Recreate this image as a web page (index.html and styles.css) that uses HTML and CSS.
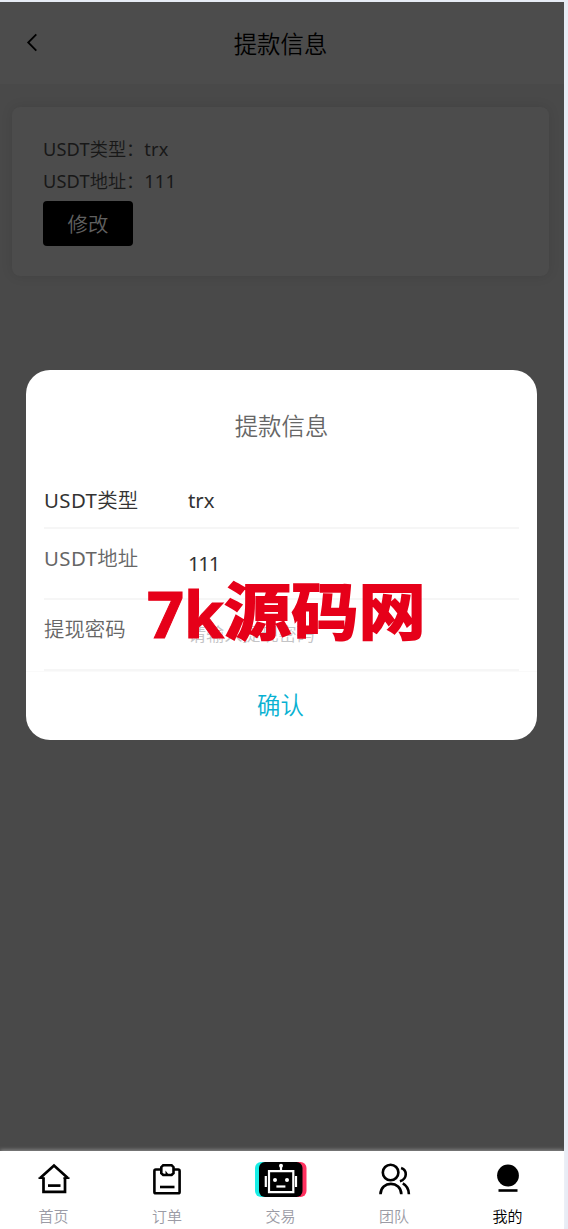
FILE: index.html
```
<!DOCTYPE html>
<html lang="zh-CN">
<head>
<meta charset="utf-8">
<title>提款信息</title>
<link rel="stylesheet" href="styles.css">
</head>
<body>
<div class="app">
  <main class="page">
    <header class="header">
      <svg class="back" width="12" height="20" viewBox="0 0 12 20"><path d="M10.3 1.3 2.2 9.5l8.1 8.2" fill="none" stroke="#000" stroke-width="1.8"/></svg>
      <h1 class="title">提款信息</h1>
    </header>
    <section class="card">
      <p class="info"><span class="latin">USDT</span>类型：<span class="latin">trx</span></p>
      <p class="info"><span class="latin">USDT</span>地址：<span class="latin">111</span></p>
      <button class="edit">修改</button>
    </section>
    <div class="modal">
      <h2 class="modal-title">提款信息</h2>
      <div class="fields">
        <div class="field field-type"><span class="label"><span class="latin">USDT</span>类型</span><span class="value latin">trx</span></div>
        <div class="field"><span class="label"><span class="latin">USDT</span>地址</span><span class="value latin digits">111</span></div>
        <div class="field"><span class="label">提现密码</span><span class="value hint">请输入提现密码</span></div>
      </div>
      <button class="confirm">确认</button>
      <div class="brand"><span class="brand-latin">7k</span><span class="brand-han">源码网</span></div>
    </div>
  </main>
  <nav class="nav">
    <a class="tab"><svg class="icon" width="36" height="36" viewBox="0 0 36 36"><path d="M7.5 16.5V30.8h21.5V16.5M4.2 17 18 4.6 31.8 17" fill="none" stroke="#000" stroke-width="2.7"/><path d="M2.5 17.2h6M27.5 17.2h6" stroke="#000" stroke-width="1.8"/><path d="M12 24.6h12.5" stroke="#000" stroke-width="2.7"/></svg><span>首页</span></a>
    <a class="tab"><svg class="icon" width="36" height="36" viewBox="0 0 36 36"><g fill="none" stroke="#000" stroke-width="2.6"><path d="M12 8.5H6.8q-1.4 0-1.4 1.4v21q0 1.4 1.4 1.4h22.4q1.4 0 1.4-1.4v-21q0-1.4-1.4-1.4H25"/><path d="M14.2 4.2h8.4l1.9 2v6l-1.9 1.8h-8.4l-1.9-1.8v-6z"/><path d="M11 26h14.5"/></g><path d="m16.5 9.5 3 4h-3z"/></svg><span>订单</span></a>
    <a class="tab"><svg class="robot" width="52" height="36" viewBox="0 0 52 36"><rect x="0" y="1" width="44" height="35" rx="6" fill="#18ede5"/><rect x="8" y="1" width="43.5" height="35" rx="6" fill="#ff315f"/><rect x="4" y="1" width="43.5" height="35" rx="6"/><g fill="none" stroke="#fff" stroke-width="2.2"><path d="M14 10.2h24.3v20.9H14z"/><path d="M26 10V5M10.8 15v11M41 15v11"/><path d="M21.4 25.5h9"/></g><circle cx="26" cy="4.8" r="2" fill="#fff"/><circle cx="20" cy="19" r="2" fill="#fff"/><circle cx="32" cy="19" r="2" fill="#fff"/></svg><span>交易</span></a>
    <a class="tab"><svg class="icon" width="36" height="36" viewBox="0 0 36 36"><g fill="none" stroke="#000" stroke-width="2.6"><circle cx="14.6" cy="11.5" r="7.8"/><path d="M4.5 33.2c0-13.8 20.8-13.8 20.8 0M25.1 6.9c6.4 2.1 6.4 11.2-1.2 13.3M26.8 22.4c3.8 2.1 6 6.2 6.1 10.8"/></g></svg><span>团队</span></a>
    <a class="tab tab-active"><svg class="icon" width="36" height="36" viewBox="0 0 36 36"><circle cx="18" cy="14.5" r="10.9"/><path d="M8.5 29.5h19" stroke="#000" stroke-width="2.6"/></svg><span>我的</span></a>
  </nav>
</div>
</body>
</html>
```
FILE: styles.css
```
* { box-sizing: border-box; }
body {
  margin: 0;
  background: #e7ecf5;
  font-family: "Noto Sans", "Noto Sans CJK SC", sans-serif;
}
h1, h2, p { margin: 0; font-weight: 350; }
button { border: 0; padding: 0; font: inherit; font-weight: 350; }
.latin { font-weight: 400; }
.app {
  width: 564px;
  height: 1229px;
  padding-top: 2px;
  display: flex;
  flex-direction: column;
}
.page { flex: 1; background: #494949; }
.header {
  height: 82px;
  background: #4c4c4c;
  display: grid;
  grid-template-columns: 66px 1fr 66px;
  align-items: center;
}
.back { margin-left: 26px; }
.title {
  text-align: center;
  font-size: 23.4px;
  line-height: 34px;
  padding: 1px 3px 0 0;
  color: #000;
}
.card {
  margin: 23px 15px 0 12px;
  height: 169px;
  padding: 26px 31px;
  border-radius: 8px;
  background: #4c4c4c;
  box-shadow: 0 0 12px rgba(0, 0, 0, .1);
}
.info {
  height: 32px;
  line-height: 32px;
  font-size: 18.2px;
  color: #181818;
  white-space: nowrap;
}
.info .latin { letter-spacing: .15px; }
.edit {
  width: 90px;
  height: 45px;
  margin-top: 4px;
  padding-bottom: 1px;
  display: block;
  border-radius: 4px;
  background: #000;
  color: #606060;
  font-size: 20.4px;
}
.modal {
  position: relative;
  margin: 94px 27px 0 26px;
  height: 370px;
  border-radius: 24px;
  background: #fff;
}
.modal-title {
  height: 104px;
  padding-top: 8px;
  line-height: 96px;
  text-align: center;
  font-size: 23.4px;
  color: #666;
}
.fields { padding: 0 18px; }
.field {
  height: 71px;
  display: grid;
  grid-template-columns: 144px 1fr;
  border-bottom: 2px solid #f6f6f6;
  line-height: 30px;
  font-size: 20.4px;
  font-weight: 350;
  color: #666;
}
.field .label { padding-top: 14px; }
.label .latin { letter-spacing: .4px; }
.field .value { padding-top: 19px; color: #333; }
.field .digits { letter-spacing: -1.3px; }
.field .hint { color: #c4c4c6; font-size: 18.1px; }
.field-type { height: 55px; color: #333; }
.field-type .label, .field-type .value { padding-top: 11px; }
.confirm {
  width: 100%;
  height: 69px;
  padding: 0 2px 4px 0;
  border-top: 1px solid #fafafa;
  background: transparent;
  color: #07b1d2;
  font-size: 23.4px;
}
.brand {
  position: absolute;
  left: 121px;
  top: 203px;
  display: flex;
  color: #e60019;
  font-weight: 700;
  line-height: 80px;
  white-space: nowrap;
}
.brand-latin {
  width: 77px;
  font-size: 65px;
  letter-spacing: -.5px;
  -webkit-text-stroke: 1px #e60019;
}
.brand-han {
  font-size: 67.2px;
  transform: translateY(-2px) scaleY(.93);
  -webkit-text-stroke: 2px #e60019;
}
.nav {
  position: relative;
  height: 78px;
  padding-right: 3px;
  display: grid;
  grid-template-columns: repeat(5, 107px);
  justify-content: space-between;
  background: #fff;
  box-shadow: 0 -1px 4px rgba(255, 255, 255, .4);
}
.tab {
  padding-top: 10px;
  display: flex;
  flex-direction: column;
  align-items: center;
  color: #9b9ba5;
  font-size: 15px;
  font-weight: 350;
  line-height: 22px;
  gap: 8px;
}
.tab-active { color: #000; }
```
